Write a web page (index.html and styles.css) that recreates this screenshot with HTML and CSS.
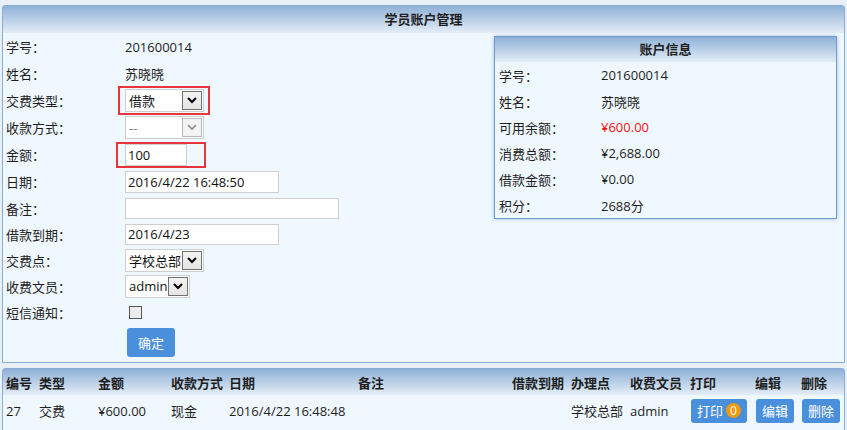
FILE: index.html
```html
<!DOCTYPE html>
<html lang="zh-CN">
<head>
    <meta charset="UTF-8">
    <title>学员账户管理</title>
    <link rel="stylesheet" href="styles.css">
</head>
<body>

    <!-- 账户管理 -->
    <div class="panel">
        <div class="panel-head">学员账户管理</div>
        <div class="panel-body">
            <div class="form">
                <div class="row"><span class="label">学号：</span><span>201600014</span></div>
                <div class="row"><span class="label">姓名：</span><span>苏晓晓</span></div>
                <div class="row">
                    <span class="label">交费类型：</span>
                    <span class="field">
                        <span class="select w79"><span class="select-text">借款</span><span class="arrow"><svg width="10" height="7" viewBox="0 0 10 7"><polyline points="1,1 5,5 9,1" fill="none" stroke="#000" stroke-width="2"/></svg></span></span>
                        <span class="mark mark-select"></span>
                    </span>
                </div>
                <div class="row">
                    <span class="label">收款方式：</span>
                    <span class="select w79 disabled"><span class="select-text">--</span><span class="arrow"><svg width="10" height="7" viewBox="0 0 10 7"><polyline points="1,1 5,5 9,1" fill="none" stroke="#8a8a8a" stroke-width="1.6"/></svg></span></span>
                </div>
                <div class="row">
                    <span class="label">金额：</span>
                    <span class="field">
                        <span class="input w62">100</span>
                        <span class="mark mark-input"></span>
                    </span>
                </div>
                <div class="row"><span class="label">日期：</span><span class="input w154">2016/4/22 16:48:50</span></div>
                <div class="row short"><span class="label">备注：</span><span class="input w214 h21"></span></div>
                <div class="row short"><span class="label">借款到期：</span><span class="input w154 h21">2016/4/23</span></div>
                <div class="row short">
                    <span class="label">交费点：</span>
                    <span class="select"><span class="select-text">学校总部</span><span class="arrow"><svg width="10" height="7" viewBox="0 0 10 7"><polyline points="1,1 5,5 9,1" fill="none" stroke="#000" stroke-width="2"/></svg></span></span>
                </div>
                <div class="row short">
                    <span class="label">收费文员：</span>
                    <span class="select"><span class="select-text">admin</span><span class="arrow"><svg width="10" height="7" viewBox="0 0 10 7"><polyline points="1,1 5,5 9,1" fill="none" stroke="#000" stroke-width="2"/></svg></span></span>
                </div>
                <div class="row short"><span class="label">短信通知：</span><span class="checkbox"></span></div>
                <div class="row-btn"><span class="label"></span><button class="btn btn-ok">确定</button></div>
            </div>

            <!-- 账户信息 -->
            <div class="info">
                <div class="info-head">账户信息</div>
                <div class="info-row"><span class="info-label">学号：</span><span>201600014</span></div>
                <div class="info-row"><span class="info-label">姓名：</span><span>苏晓晓</span></div>
                <div class="info-row"><span class="info-label">可用余额：</span><span class="red">¥600.00</span></div>
                <div class="info-row"><span class="info-label">消费总额：</span><span>¥2,688.00</span></div>
                <div class="info-row"><span class="info-label">借款金额：</span><span>¥0.00</span></div>
                <div class="info-row"><span class="info-label">积分：</span><span>2688分</span></div>
            </div>
        </div>
    </div>

    <!-- 记录列表 -->
    <div class="panel list">
        <div class="grid grid-head">
            <span>编号</span><span>类型</span><span>金额</span><span>收款方式</span><span>日期</span><span>备注</span>
            <span>借款到期</span><span>办理点</span><span>收费文员</span><span>打印</span><span>编辑</span><span>删除</span>
        </div>
        <div class="grid grid-row">
            <span>27</span><span>交费</span><span>¥600.00</span><span>现金</span><span>2016/4/22 16:48:48</span><span></span>
            <span></span><span>学校总部</span><span>admin</span>
            <span><button class="btn btn-sm">打印 <span class="badge">0</span></button></span>
            <span><button class="btn btn-sm">编辑</button></span>
            <span><button class="btn btn-sm">删除</button></span>
        </div>
    </div>

</body>
</html>
```

FILE: styles.css
```css
body {
    margin: 0;
    padding: 5px 2px 0;
    background: #e9eff6;
    font-family: "Open Sans", "Noto Sans CJK SC", sans-serif;
    font-size: 13px;
    color: #1e1e1e;
    overflow: hidden;
}

/* 面板 */
.panel {
    border: 1px solid #8aaed3;
    border-radius: 3px 3px 0 0;
    background: #f0f8ff;
}
.panel-head {
    height: 27px;
    line-height: 27px;
    text-align: center;
    font-weight: bold;
    background: linear-gradient(#8fb1d7, #e4edf7);
}
.panel-body {
    display: flex;
    align-items: flex-start;
}

/* 表单 */
.form {
    flex: 1;
    padding-left: 3px;
}
.row {
    height: 27px;
    display: flex;
    align-items: center;
}
.row.short {
    height: 26px;
}
.row-btn {
    height: 37px;
    display: flex;
    align-items: flex-start;
}
.label {
    width: 119px;
    flex-shrink: 0;
}
.field {
    position: relative;
    display: inline-flex;
}
.input {
    box-sizing: border-box;
    height: 22px;
    line-height: 20px;
    border: 1px solid #cfcfcf;
    background: #fff;
    padding-left: 2px;
    color: #111;
}
.h21 { height: 21px; line-height: 19px; }
.w62 { width: 62px; }
.w79 { width: 79px; }
.w154 { width: 154px; }
.w214 { width: 214px; }

.select {
    box-sizing: border-box;
    height: 23px;
    display: inline-flex;
    align-items: center;
    justify-content: space-between;
    border: 1px solid #cfcfcf;
    background: #fff;
    padding: 0 1px 0 3px;
    color: #111;
}
.select-text {
    padding-right: 1px;
}
.arrow {
    box-sizing: border-box;
    width: 20px;
    height: 19px;
    display: flex;
    align-items: center;
    justify-content: center;
    border: 1px solid #707070;
    background: linear-gradient(#f4f4f4, #e4e4e4);
}
.select.disabled {
    color: #777;
}
.select.disabled .arrow {
    border-color: #b9b9b9;
    background: #f3f3f3;
}
.checkbox {
    box-sizing: border-box;
    width: 13px;
    height: 13px;
    margin-left: 4px;
    border: 1px solid #555;
    background: #ececec;
}

/* 红色标记框 */
.mark {
    position: absolute;
    border: 2px solid #e8353b;
}
.mark-select {
    left: -7px;
    top: -3px;
    right: -6px;
    bottom: -3px;
}
.mark-input {
    left: -9px;
    top: -2px;
    right: -19px;
    bottom: -2px;
}

/* 按钮 */
.btn {
    border: none;
    border-radius: 3px;
    background: #4a8fdb;
    color: #fff;
    font-family: inherit;
    font-size: 13px;
    cursor: pointer;
}
.btn-ok {
    margin: 3px 0 0 2px;
    width: 48px;
    height: 29px;
}
.btn-sm {
    height: 24px;
    padding: 0 6px;
    display: inline-flex;
    align-items: center;
}
.badge {
    display: inline-block;
    width: 15px;
    height: 15px;
    line-height: 15px;
    margin-left: 3px;
    border-radius: 50%;
    background: #f39a0b;
    color: #fff;
    font-size: 12px;
    text-align: center;
}

/* 账户信息 */
.info {
    width: 343px;
    box-sizing: border-box;
    margin: 3px 7px 0 0;
    border: 1px solid #6d9ac9;
    box-shadow: 0 0 4px #9fc1e2;
    background: #f0f8ff;
}
.info-head {
    height: 25px;
    line-height: 25px;
    text-align: center;
    font-weight: bold;
    background: linear-gradient(#8fb1d7, #e4edf7);
}
.info-row {
    height: 26px;
    display: flex;
    align-items: center;
    padding-left: 4px;
}
.info-label {
    width: 102px;
}
.red {
    color: #f01010;
}

/* 列表 */
.list {
    margin-top: 5px;
    height: 80px;
}
.grid {
    display: grid;
    grid-template-columns: 33px 59px 73px 58px 129px 154px 59px 59px 60px 65px 46px 1fr;
    align-items: center;
    padding-left: 3px;
}
.grid-head {
    height: 26px;
    font-weight: bold;
    background: linear-gradient(#8fb1d7, #e4edf7);
}
.grid-row {
    height: 31px;
}
.grid-row .btn-sm {
    margin-left: 1px;
}
```
